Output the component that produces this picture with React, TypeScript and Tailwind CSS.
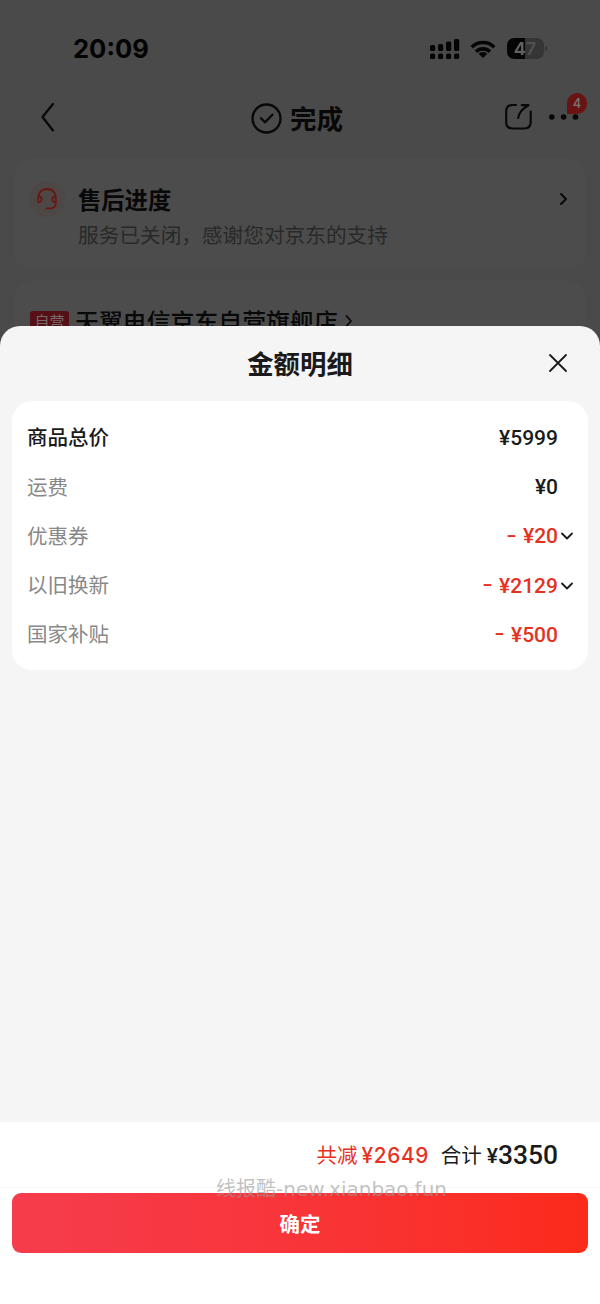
import React from 'react';

const rows = [
  { label: '商品总价', value: '¥5999', strong: true },
  { label: '运费', value: '¥0' },
  { label: '优惠券', value: '¥20', minus: true, expandable: true },
  { label: '以旧换新', value: '¥2129', minus: true, expandable: true },
  { label: '国家补贴', value: '¥500', minus: true },
];

const StatusBar = () => (
  <div className="h-[96px] flex items-center justify-between pl-[73px] pr-[53px] pt-px">
    <span className="font-['Inter'] font-bold text-[25.6px] leading-none text-[#030303]">20:09</span>
    <div className="flex items-center">
      <svg width="30" height="22" viewBox="0 0 30 22" fill="#050505">
        <rect x="0" y="7" width="5.2" height="6" rx="1.5" />
        <rect x="8" y="6" width="5.2" height="7" rx="1.5" />
        <rect x="16" y="3.5" width="5.2" height="9.5" rx="1.5" />
        <rect x="24" y="1" width="5.2" height="12" rx="1.5" />
        <rect x="0" y="15.5" width="5.2" height="5.5" rx="1.6" />
        <rect x="8" y="15.5" width="5.2" height="5.5" rx="1.6" />
        <rect x="16" y="15.5" width="5.2" height="5.5" rx="1.6" />
        <rect x="24" y="15.5" width="5.2" height="5.5" rx="1.6" />
      </svg>
      <svg className="ml-[10px]" width="26" height="20" viewBox="0 0 26 20" fill="none" stroke="#050505" strokeWidth="3.6">
        <path d="M1.7 8.2 A16 16 0 0 1 24.3 8.2" />
        <path d="M6 12.7 A10 10 0 0 1 20 12.7" />
        <path d="M13 19 L8.6 14.8 A6.3 6.3 0 0 1 17.4 14.8 Z" fill="#050505" stroke="none" />
      </svg>
      <div className="ml-[11px] w-[37px] h-[21px] rounded-[7px] bg-[linear-gradient(90deg,#050505_18px,#353535_18px)] flex items-center justify-center">
        <span className="font-['Inter'] font-bold text-[18px] leading-none bg-[linear-gradient(90deg,#606060_11px,#505050_11px)] bg-clip-text text-transparent">47</span>
      </div>
      <div className="ml-[1.5px] w-[2px] h-[5px] rounded-r-full bg-[#353535]" />
    </div>
  </div>
);

const NavBar = () => (
  <div className="h-[62px] grid grid-cols-3 items-start pt-[6px]">
    <svg className="ml-[40px]" width="16" height="31" viewBox="0 0 16 31" fill="none" stroke="#080808" strokeWidth="2.2" strokeLinecap="round" strokeLinejoin="round">
      <path d="M13 2 L2.5 15 L13 28.5" />
    </svg>
    <div className="flex items-center justify-center gap-[8px] pr-[6px] -mt-px">
      <svg width="31" height="31" viewBox="0 0 31 31" fill="none" stroke="#080808" strokeWidth="2.3" strokeLinecap="round" strokeLinejoin="round">
        <circle cx="15.5" cy="15.5" r="14" />
        <path d="M10 15.2 L14 19.3 L21.5 11.8" />
      </svg>
      <span className="font-bold text-[26.5px] leading-[34px] text-[#080808] whitespace-nowrap">完成</span>
    </div>
    <div className="flex justify-end pr-[13px]">
      <svg className="mr-[16px] mt-px" width="28" height="28" viewBox="0 0 28 28" fill="none" stroke="#080808" strokeWidth="2.2" strokeLinecap="round" strokeLinejoin="round">
        <path d="M11 2 H7.5 Q1.2 2 1.2 8.2 V19.3 Q1.2 25.5 7.5 25.5 H19.5 Q25.7 25.5 25.7 19.3 V8.5" />
        <path d="M13.2 15 Q14 7.5 23.5 2.2 H16.8" />
      </svg>
      <div className="relative w-[38px] h-[28px] mt-px">
        <svg width="30" height="28" viewBox="0 0 30 28" fill="#080808">
          <circle cx="2.8" cy="14" r="2.8" />
          <circle cx="14.6" cy="14" r="2.8" />
          <circle cx="26.5" cy="14" r="2.8" />
        </svg>
        <div className="absolute left-[18px] -top-[10px] w-5 h-[21px] rounded-full rounded-bl-none bg-[#6a1313] flex items-center justify-center">
          <span className="font-['Inter'] font-medium text-[13px] leading-none text-[#777]">4</span>
        </div>
      </div>
    </div>
  </div>
);

const OrderPage = () => (
  <div className="h-[326px] overflow-hidden bg-[#4a4a4a]">
    <StatusBar />
    <NavBar />
    <div className="mx-[14px] h-[111px] rounded-[18px] bg-[#4c4c4c] flex pl-[15px] pr-[17px]">
      <div className="mt-[23px] w-[36px] h-[36px] shrink-0 rounded-full bg-[#4d4745] flex items-center justify-center">
        <svg width="22" height="24" viewBox="0 0 22 24" fill="none" stroke="#6a1714" strokeWidth="1.8" strokeLinecap="round" strokeLinejoin="round">
          <path d="M2.3 10 Q3.2 2 11 2 Q18.8 2 19.7 10 V16.5 Q19.7 21.3 14 21.3 H10.5" />
          <path d="M2.2 9.5 Q5.6 9 5.6 12.2 Q5.6 15.5 2.2 14.8 Z M19.8 9.5 Q16.2 9 16.2 12.2 Q16.2 15.5 19.8 14.8" />
        </svg>
      </div>
      <div className="ml-[13px] flex-1">
        <div className="mt-[24px] flex items-center justify-between">
          <span className="font-bold text-[23.3px] leading-[34px] text-[#080808]">售后进度</span>
          <svg width="12" height="16" viewBox="0 0 12 16" fill="none" stroke="#080808" strokeWidth="2" strokeLinecap="round" strokeLinejoin="round">
            <path d="M4 3 L9 8 L4 13" />
          </svg>
        </div>
        <p className="mt-[3px] text-[20.67px] leading-[30px] text-[#292929]">服务已关闭，感谢您对京东的支持</p>
      </div>
    </div>
    <div className="mx-[14px] mt-[12px] h-[80px] rounded-[18px] bg-[#4c4c4c] flex items-start pl-[16px] pt-[23px]">
      <span className="mt-[7px] w-[39px] h-[24px] rounded-[3px] bg-[#541014] text-[#77696a] text-[15px] leading-[20px] text-center">自营</span>
      <span className="ml-[6px] font-medium text-[23.9px] leading-[34px] text-[#080808]">天翼电信京东自营旗舰店</span>
      <svg className="ml-[6px] mt-[9px]" width="12" height="16" viewBox="0 0 12 16" fill="none" stroke="#080808" strokeWidth="1.8" strokeLinecap="round" strokeLinejoin="round">
        <path d="M2.5 3 L7 8 L2.5 13" />
      </svg>
    </div>
  </div>
);

export default function App() {
  return (
    <div className="w-[600px] h-[1304px] flex flex-col overflow-hidden bg-[#4a4a4a] font-['Noto_Sans_CJK_SC',sans-serif]">
      <OrderPage />

      <div className="flex-1 flex flex-col rounded-t-[20px] bg-[#f5f5f5] overflow-hidden">
        <div className="h-[75px] grid grid-cols-[1fr_auto_1fr] items-center">
          <h2 className="col-start-2 pb-[2px] font-bold text-[26.4px] leading-[38px] text-[#1a1a1a]">金额明细</h2>
          <svg className="justify-self-end mr-[32px] mb-px" width="20" height="20" viewBox="0 0 20 20" fill="none" stroke="#1a1a1a" strokeWidth="1.8" strokeLinecap="round">
            <path d="M2 2 L18 18 M18 2 L2 18" />
          </svg>
        </div>

        <div className="mx-3 h-[269px] rounded-[20px] bg-white pt-[12px] pl-[15px] pr-[12px]">
          {rows.map(r => (
            <div key={r.label} className="h-[49.3px] flex items-center">
              <span className={`flex-1 pb-[2px] text-[20.5px] ${r.strong ? 'font-medium text-[#1a1a1a]' : 'text-[#888888]'}`}>{r.label}</span>
              <span className={`flex items-center pt-px font-['Roboto'] font-medium text-[21px] leading-none ${r.minus ? 'text-[#e5321f]' : 'text-[#1a1a1a]'}`}>
                {r.minus && <span className="mr-[8px] pb-[3px] scale-x-140">-</span>}
                {r.value}
              </span>
              <span className="w-[18px] flex justify-end">
                {r.expandable && (
                  <svg className="mr-[2px]" width="14" height="10" viewBox="0 0 14 10" fill="none" stroke="#1a1a1a" strokeWidth="1.8" strokeLinecap="round" strokeLinejoin="round">
                    <path d="M2 2.5 L7 7.5 L12 2.5" />
                  </svg>
                )}
              </span>
            </div>
          ))}
        </div>

        <div className="mt-auto h-[182px] bg-white">
          <div className="h-[66px] border-b border-[#f5f5f5] flex items-baseline justify-end pr-[42px] pt-[16px]">
            <span className="text-[20.5px] leading-[32px] text-[#e5321f]">共减</span>
            <span className="ml-[4px] font-['Inter'] font-medium text-[20.8px] tracking-[0.6px] leading-none text-[#e5321f]">¥2649</span>
            <span className="ml-[12px] text-[20.5px] leading-[32px] text-[#1a1a1a]">合计</span>
            <span className="ml-[5px] font-['Roboto'] font-medium text-[21px] leading-none text-[#1a1a1a]">¥</span>
            <span className="relative top-px font-['Roboto'] font-medium text-[26.4px] leading-none text-[#1a1a1a]">3350</span>
          </div>
          <div className="relative px-3 pt-[5px]">
            <button className="w-full h-[60px] rounded-[9px] bg-linear-to-r from-[#f63c4d] to-[#fb2b19] flex items-center justify-center text-white font-bold text-[20.5px]">确定</button>
            <span className="absolute left-[216px] -top-[15px] text-[20px] leading-[30px] text-[#999]/60 whitespace-nowrap">
              线报酷<span className="font-['DejaVu_Sans']">-new.xianbao.fun</span>
            </span>
          </div>
        </div>
      </div>
    </div>
  );
}
